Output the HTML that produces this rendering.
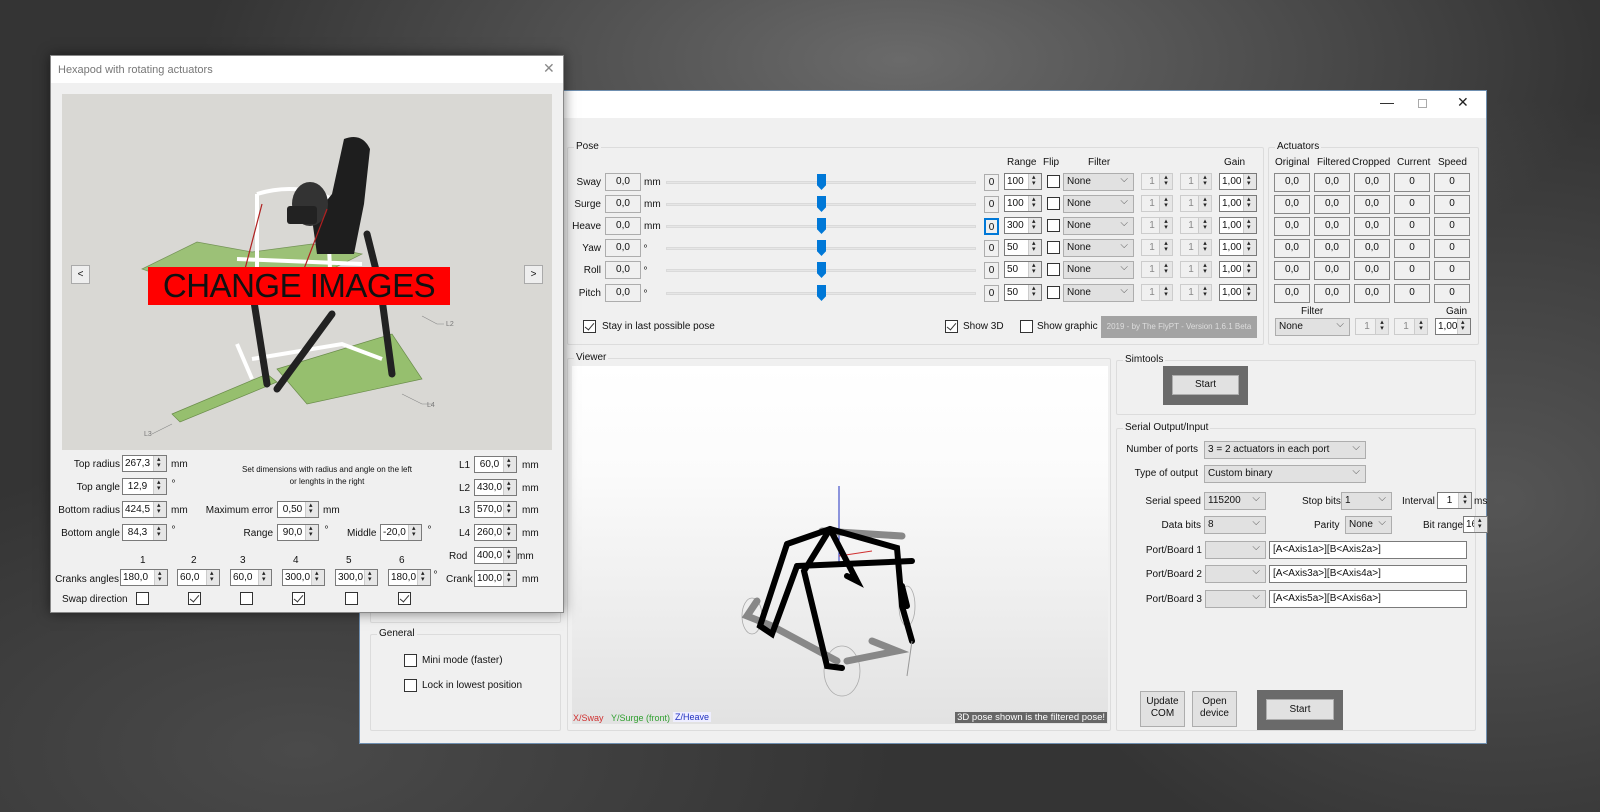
<!DOCTYPE html>
<html><head><meta charset="utf-8">
<style>
*{box-sizing:border-box;margin:0;padding:0;white-space:nowrap}
body{width:1600px;height:812px;overflow:hidden;position:relative;font-family:"Liberation Sans",sans-serif;font-size:10px;color:#111;
background:radial-gradient(ellipse 700px 300px at 900px 60px,#6a6a6a,transparent),radial-gradient(ellipse 500px 400px at 1500px 500px,#555,transparent),radial-gradient(ellipse 600px 300px at 300px 750px,#4a4a4a,transparent),#343434;}
.a{position:absolute}
.win{position:absolute;background:#f0f0f0;border:1px solid #6f8fb0}
.tb{position:absolute;left:0;right:0;top:0;height:27px;background:#fff}
.gb{position:absolute;border:1px solid #dcdcdc;border-radius:2px}
.gl{position:absolute;top:-7px;left:6px;background:#f0f0f0;padding:0 2px;font-size:10px}
.tx{position:absolute;height:18px;border:1px solid #adadad;background:#f0f0f0;text-align:center;line-height:16px;font-size:10px}
.sp{position:absolute;height:17px;border:1px solid #7a7a7a;background:#fff;line-height:15px;padding-left:2px;font-size:10px;overflow:hidden}
.sp:after{content:"";position:absolute;right:0;top:0;bottom:0;width:12px;background:#e6e6e6;border-left:1px solid #ccc}
.sp i{position:absolute;right:3px;top:1px;width:6px;font-style:normal;font-size:7px;line-height:6px;z-index:1;color:#222}
.spd{border-color:#ccc;color:#888;background:#f0f0f0;text-align:center;padding-right:12px}
.cb{position:absolute;width:13px;height:13px;border:1px solid #333;background:#fff}
.cb.k:after{content:"";position:absolute;left:3px;top:0px;width:4px;height:8px;border:solid #333;border-width:0 1px 1px 0;transform:rotate(40deg)}
.cmb{position:absolute;height:18px;border:1px solid #adadad;background:#e1e1e1;padding-left:3px;line-height:16px;font-size:10px}
.cmb:after{content:"⌵";position:absolute;right:5px;top:-2px;color:#555;font-size:10px}
.r{text-align:right}
.btn{position:absolute;background:#e1e1e1;border:1px solid #adadad;text-align:center;font-size:10px}
</style></head><body>

<div class="win" style="left:359px;top:90px;width:1128px;height:654px">
 <div class="tb" style="height:27px"></div>
 <div class="a" style="left:1020px;top:3px;font-size:14px;color:#222">—</div>
 <div class="a" style="left:1058px;top:8px;width:9px;height:9px;border:1px solid #aaa"></div>
 <div class="a" style="left:1097px;top:3px;font-size:14px;color:#222">✕</div>
</div>

<div class="gb" style="left:370px;top:560px;width:191px;height:63px"></div>
<div class="gb" style="left:370px;top:634px;width:191px;height:97px"><span class="gl">General</span></div>
<div class="cb" style="left:404px;top:654px"></div><div class="a" style="left:422px;top:655px">Mini mode (faster)</div>
<div class="cb" style="left:404px;top:679px"></div><div class="a" style="left:422px;top:680px">Lock in lowest position</div>

<div class="gb" style="left:567px;top:147px;width:697px;height:198px"><span class="gl">Pose</span></div>
<div class="a" style="left:1007px;top:157px">Range</div>
<div class="a" style="left:1043px;top:157px">Flip</div>
<div class="a" style="left:1088px;top:157px">Filter</div>
<div class="a" style="left:1224px;top:157px">Gain</div>

<div id="rows"></div>

<div class="cb k" style="left:583px;top:320px"></div><div class="a" style="left:602px;top:321px">Stay in last possible pose</div>
<div class="cb k" style="left:945px;top:320px"></div><div class="a" style="left:963px;top:321px">Show 3D</div>
<div class="cb" style="left:1020px;top:320px"></div><div class="a" style="left:1037px;top:321px">Show graphic</div>
<div class="a" style="left:1101px;top:316px;width:156px;height:22px;background:#a3a3a3;color:#ddd;font-size:8px;line-height:22px;text-align:center">2019 - by The FlyPT - Version 1.6.1 Beta</div>

<div class="gb" style="left:1268px;top:147px;width:211px;height:198px"><span class="gl">Actuators</span></div>
<div class="a" style="left:1275px;top:157px">Original</div>
<div class="a" style="left:1317px;top:157px">Filtered</div>
<div class="a" style="left:1352px;top:157px">Cropped</div>
<div class="a" style="left:1397px;top:157px">Current</div>
<div class="a" style="left:1438px;top:157px">Speed</div>
<div id="acts"></div>
<div class="a" style="left:1301px;top:306px">Filter</div>
<div class="a" style="left:1446px;top:306px">Gain</div>
<div class="cmb" style="left:1275px;top:318px;width:75px">None</div>
<div class="sp spd" style="left:1355px;top:318px;width:34px">1<i>▴<br>▾</i></div>
<div class="sp spd" style="left:1394px;top:318px;width:34px">1<i>▴<br>▾</i></div>
<div class="sp" style="left:1435px;top:318px;width:36px">1,00<i>▴<br>▾</i></div>

<div class="gb" style="left:567px;top:358px;width:544px;height:373px"><span class="gl">Viewer</span></div>
<div class="a" style="left:572px;top:366px;width:536px;height:358px;overflow:hidden;background:linear-gradient(#fff 0%,#fbfbfb 30%,#e2e2e2 100%)">
<svg width="536" height="358" style="position:absolute;left:0;top:0">
 <line x1="267" y1="120" x2="267" y2="200" stroke="#2030c0" stroke-width="1"/>
 <line x1="267" y1="190" x2="300" y2="185" stroke="#d03030" stroke-width="1"/>
 <g fill="none" stroke="#aaa" stroke-width="0.8">
  <ellipse cx="180" cy="250" rx="10" ry="18"/><ellipse cx="270" cy="305" rx="18" ry="25"/><ellipse cx="335" cy="240" rx="8" ry="20"/>
 </g>
 <g stroke="#888" stroke-width="7" stroke-linecap="round" fill="none">
  <path d="M185 235 L175 250 L200 260"/><path d="M200 260 L265 295"/><path d="M275 295 L325 285 L300 275"/><path d="M250 165 L330 170"/>
 </g>
 <g stroke="#000" stroke-width="6" stroke-linecap="round" fill="none">
  <path d="M215 178 L258 163 L325 182 L330 240 L340 275"/>
  <path d="M258 163 L232 205 L255 300 L270 302"/>
  <path d="M215 178 L188 260 L200 268 L225 200"/>
  <path d="M225 200 L340 195"/>
  <path d="M258 163 L285 215 L275 210"/>
  <path d="M330 220 L335 240"/>
 </g>
 <line x1="340" y1="275" x2="335" y2="310" stroke="#999" stroke-width="1"/>
</svg>
<div class="a" style="left:1px;top:347px;font-size:9px;color:#d03030">X/Sway</div>
<div class="a" style="left:39px;top:347px;font-size:9px;color:#30a030">Y/Surge (front)</div>
<div class="a" style="left:101px;top:346px;font-size:9px;color:#2030c0;background:#eef;padding:0 2px">Z/Heave</div>
<div class="a" style="right:1px;top:346px;font-size:9.5px;color:#fff;background:#666;padding:0 2px">3D pose shown is the filtered pose!</div>
</div>

<div class="gb" style="left:1116px;top:360px;width:360px;height:55px"><span class="gl">Simtools</span></div>
<div class="a" style="left:1163px;top:366px;width:85px;height:39px;background:#6a6a6a"></div>
<div class="btn" style="left:1172px;top:375px;width:67px;height:20px;line-height:18px">Start</div>

<div class="gb" style="left:1116px;top:428px;width:360px;height:303px"><span class="gl">Serial Output/Input</span></div>
<div class="a r" style="left:1120px;top:444px;width:78px">Number of ports</div>
<div class="cmb" style="left:1204px;top:441px;width:162px">3 = 2 actuators in each port</div>
<div class="a r" style="left:1120px;top:468px;width:78px">Type of output</div>
<div class="cmb" style="left:1204px;top:465px;width:162px">Custom binary</div>
<div class="a r" style="left:1120px;top:496px;width:81px">Serial speed</div>
<div class="cmb" style="left:1204px;top:492px;width:62px">115200</div>
<div class="a" style="left:1302px;top:496px">Stop bits</div>
<div class="cmb" style="left:1341px;top:492px;width:51px">1</div>
<div class="a" style="left:1402px;top:496px">Interval</div>
<div class="sp" style="left:1437px;top:492px;width:35px;text-align:center;padding-right:12px">1<i>▴<br>▾</i></div>
<div class="a" style="left:1474px;top:496px">ms</div>
<div class="a r" style="left:1120px;top:520px;width:81px">Data bits</div>
<div class="cmb" style="left:1204px;top:516px;width:62px">8</div>
<div class="a" style="left:1314px;top:520px">Parity</div>
<div class="cmb" style="left:1345px;top:516px;width:47px">None</div>
<div class="a" style="left:1423px;top:520px">Bit range</div>
<div class="sp" style="left:1463px;top:516px;width:25px">16<i>▴<br>▾</i></div>
<div class="a r" style="left:1120px;top:545px;width:82px">Port/Board 1</div>
<div class="cmb" style="left:1205px;top:541px;width:61px"></div>
<div class="a" style="left:1269px;top:541px;width:198px;height:18px;border:1px solid #7a7a7a;background:#fff;padding-left:3px;line-height:16px">[A&lt;Axis1a&gt;][B&lt;Axis2a&gt;]</div>
<div class="a r" style="left:1120px;top:569px;width:82px">Port/Board 2</div>
<div class="cmb" style="left:1205px;top:565px;width:61px"></div>
<div class="a" style="left:1269px;top:565px;width:198px;height:18px;border:1px solid #7a7a7a;background:#fff;padding-left:3px;line-height:16px">[A&lt;Axis3a&gt;][B&lt;Axis4a&gt;]</div>
<div class="a r" style="left:1120px;top:594px;width:82px">Port/Board 3</div>
<div class="cmb" style="left:1205px;top:590px;width:61px"></div>
<div class="a" style="left:1269px;top:590px;width:198px;height:18px;border:1px solid #7a7a7a;background:#fff;padding-left:3px;line-height:16px">[A&lt;Axis5a&gt;][B&lt;Axis6a&gt;]</div>
<div class="btn" style="left:1140px;top:691px;width:45px;height:36px;padding-top:4px;line-height:12px">Update<br>COM</div>
<div class="btn" style="left:1192px;top:691px;width:45px;height:36px;padding-top:4px;line-height:12px">Open<br>device</div>
<div class="a" style="left:1257px;top:690px;width:86px;height:40px;background:#6a6a6a"></div>
<div class="btn" style="left:1266px;top:699px;width:68px;height:21px;line-height:19px">Start</div>

<div class="win" style="left:50px;top:55px;width:514px;height:558px;border-color:#888;box-shadow:0 0 12px rgba(0,0,0,.5)">
 <div class="tb" style="height:27px"></div>
 <div class="a" style="left:7px;top:8px;font-size:11px;color:#777">Hexapod with rotating actuators</div>
 <div class="a" style="left:492px;top:4px;font-size:14px;color:#888">✕</div>
 <div class="a" style="left:11px;top:38px;width:490px;height:356px;background:#d9d8d4">
  <svg width="490" height="356" style="position:absolute;left:0;top:0">
   <polygon points="80,175 135,148 190,158 250,150 300,160 250,185 100,182" fill="#96bf6e" stroke="#6a8c4a" stroke-width="0.7" opacity="0.9"/>
   <polygon points="215,275 330,240 360,285 245,310" fill="#96bf6e" stroke="#6a8c4a" stroke-width="0.7"/>
   <polygon points="110,320 205,280 215,288 118,328" fill="#96bf6e" stroke="#6a8c4a" stroke-width="0.7"/>
   <g stroke="#fff" stroke-width="4" fill="none"><path d="M195 100 L195 175 M265 110 L268 175 M195 100 Q235 88 270 105 M175 165 L300 170 M190 265 L280 250 L320 265 M175 250 L190 285"/></g>
   <g stroke="#222" stroke-width="7" stroke-linecap="round"><line x1="190" y1="195" x2="205" y2="290"/><line x1="320" y1="205" x2="330" y2="280"/><line x1="270" y1="220" x2="215" y2="295"/><line x1="305" y1="140" x2="320" y2="200"/></g>
   <path d="M282 45 Q300 38 308 55 L302 110 L292 160 L255 160 L250 125 L270 100 Z" fill="#1e1e1e"/>
   <ellipse cx="248" cy="110" rx="18" ry="22" fill="#333"/>
   <rect x="225" y="112" width="30" height="18" fill="#222" rx="3"/>
   <g stroke="#b02020" stroke-width="1.2"><line x1="200" y1="110" x2="183" y2="175"/><line x1="265" y1="115" x2="240" y2="180"/></g>
   <g stroke="#888" stroke-width="0.6" fill="none"><path d="M340 300 L360 310 L370 310 M90 340 L110 330 M360 222 L375 230 L382 230"/></g>
   <text x="365" y="313" font-size="7" fill="#777">L4</text><text x="82" y="342" font-size="7" fill="#777">L3</text><text x="384" y="232" font-size="7" fill="#777">L2</text>
  </svg>
  <div class="a" style="left:86px;top:173px;width:302px;height:38px;background:#f00;color:#111;font-size:33px;line-height:38px;text-align:center;letter-spacing:-0.5px">CHANGE IMAGES</div>
  <div class="a" style="left:9px;top:171px;width:19px;height:19px;border:1px solid #aaa;background:#eee;text-align:center;line-height:17px;font-size:10px">&lt;</div>
  <div class="a" style="left:462px;top:171px;width:19px;height:19px;border:1px solid #aaa;background:#eee;text-align:center;line-height:17px;font-size:10px">&gt;</div>
 </div>
</div>

<div class="a r" style="left:50px;top:459px;width:70px">Top radius</div><div class="sp" style="left:122px;top:455px;width:45px">267,3<i>▴<br>▾</i></div><div class="a" style="left:171px;top:459px">mm</div>
<div class="a r" style="left:50px;top:482px;width:70px">Top angle</div><div class="sp" style="left:122px;top:478px;width:45px">&nbsp;12,9<i>▴<br>▾</i></div><div class="a" style="left:172px;top:478px;font-size:8px">º</div>
<div class="a r" style="left:40px;top:505px;width:80px">Bottom radius</div><div class="sp" style="left:122px;top:501px;width:45px">424,5<i>▴<br>▾</i></div><div class="a" style="left:171px;top:505px">mm</div>
<div class="a r" style="left:40px;top:528px;width:80px">Bottom angle</div><div class="sp" style="left:122px;top:524px;width:45px">&nbsp;84,3<i>▴<br>▾</i></div><div class="a" style="left:172px;top:524px;font-size:8px">º</div>
<div class="a" style="left:212px;top:464px;width:230px;text-align:center;font-size:8px;line-height:12px">Set dimensions with radius and angle on the left<br>or lenghts in the right</div>
<div class="a r" style="left:190px;top:505px;width:83px">Maximum error</div><div class="sp" style="left:277px;top:501px;width:42px">&nbsp;0,50<i>▴<br>▾</i></div><div class="a" style="left:323px;top:505px">mm</div>
<div class="a r" style="left:200px;top:528px;width:73px">Range</div><div class="sp" style="left:277px;top:524px;width:42px">&nbsp;90,0<i>▴<br>▾</i></div><div class="a" style="left:325px;top:524px;font-size:8px">º</div>
<div class="a" style="left:347px;top:528px">Middle</div><div class="sp" style="left:380px;top:524px;width:42px">-20,0<i>▴<br>▾</i></div><div class="a" style="left:428px;top:524px;font-size:8px">º</div>
<div class="a" style="left:459px;top:460px">L1</div><div class="sp" style="left:474px;top:456px;width:43px">&nbsp;60,0<i>▴<br>▾</i></div><div class="a" style="left:522px;top:460px">mm</div>
<div class="a" style="left:459px;top:483px">L2</div><div class="sp" style="left:474px;top:479px;width:43px">430,0<i>▴<br>▾</i></div><div class="a" style="left:522px;top:483px">mm</div>
<div class="a" style="left:459px;top:505px">L3</div><div class="sp" style="left:474px;top:501px;width:43px">570,0<i>▴<br>▾</i></div><div class="a" style="left:522px;top:505px">mm</div>
<div class="a" style="left:459px;top:528px">L4</div><div class="sp" style="left:474px;top:524px;width:43px">260,0<i>▴<br>▾</i></div><div class="a" style="left:522px;top:528px">mm</div>
<div class="a" style="left:449px;top:551px">Rod</div><div class="sp" style="left:474px;top:547px;width:43px">400,0<i>▴<br>▾</i></div><div class="a" style="left:517px;top:551px">mm</div>
<div class="a" style="left:446px;top:574px">Crank</div><div class="sp" style="left:474px;top:570px;width:43px">100,0<i>▴<br>▾</i></div><div class="a" style="left:522px;top:574px">mm</div>
<div class="a" style="left:140px;top:555px">1</div><div class="a" style="left:191px;top:555px">2</div><div class="a" style="left:240px;top:555px">3</div><div class="a" style="left:293px;top:555px">4</div><div class="a" style="left:346px;top:555px">5</div><div class="a" style="left:399px;top:555px">6</div>
<div class="a r" style="left:40px;top:574px;width:79px">Cranks angles</div>
<div class="sp" style="left:120px;top:569px;width:48px">180,0<i>▴<br>▾</i></div>
<div class="sp" style="left:177px;top:569px;width:43px">60,0<i>▴<br>▾</i></div>
<div class="sp" style="left:230px;top:569px;width:42px">60,0<i>▴<br>▾</i></div>
<div class="sp" style="left:282px;top:569px;width:43px">300,0<i>▴<br>▾</i></div>
<div class="sp" style="left:335px;top:569px;width:43px">300,0<i>▴<br>▾</i></div>
<div class="sp" style="left:388px;top:569px;width:43px">180,0<i>▴<br>▾</i></div>
<div class="a" style="left:434px;top:569px;font-size:8px">º</div>
<div class="a" style="left:62px;top:594px">Swap direction</div>
<div class="cb" style="left:136px;top:592px"></div><div class="cb k" style="left:188px;top:592px"></div><div class="cb" style="left:240px;top:592px"></div><div class="cb k" style="left:292px;top:592px"></div><div class="cb" style="left:345px;top:592px"></div><div class="cb k" style="left:398px;top:592px"></div>

<script>
var names=["Sway","Surge","Heave","Yaw","Roll","Pitch"],ranges=[100,100,300,50,50,50],ys=[173,195,217,239,261,284],h="",a="";
for(var i=0;i<6;i++){var y=ys[i];
h+='<div class="a r" style="left:555px;top:'+(y+4)+'px;width:46px">'+names[i]+'</div>';
h+='<div class="tx" style="left:605px;top:'+y+'px;width:36px">0,0</div>';
h+='<div class="a" style="left:644px;top:'+(y+4)+'px;'+(i>2?'font-size:8px':'')+'">'+(i<3?'mm':'º')+'</div>';
h+='<div class="a" style="left:666px;top:'+(y+8)+'px;width:310px;height:3px;background:#e6e6e6;border:1px solid #dadada"></div>';
h+='<div class="a" style="left:817px;top:'+(y+1)+'px;width:9px;height:16px;background:#0078d7;clip-path:polygon(0 0,100% 0,100% 70%,50% 100%,0 70%)"></div>';
h+='<div class="tx" style="left:984px;top:'+(y+1)+'px;width:15px;height:17px;'+(i==2?'border:2px solid #0078d7;':'')+'">0</div>';
h+='<div class="sp" style="left:1004px;top:'+y+'px;width:38px">'+ranges[i]+'<i>▴<br>▾</i></div>';
h+='<div class="cb" style="left:1047px;top:'+(y+2)+'px"></div>';
h+='<div class="cmb" style="left:1063px;top:'+y+'px;width:71px">None</div>';
h+='<div class="sp spd" style="left:1141px;top:'+y+'px;width:32px">1<i>▴<br>▾</i></div>';
h+='<div class="sp spd" style="left:1180px;top:'+y+'px;width:32px">1<i>▴<br>▾</i></div>';
h+='<div class="sp" style="left:1219px;top:'+y+'px;width:38px">1,00<i>▴<br>▾</i></div>';
var xs=[1274,1314,1354,1394,1434],v=["0,0","0,0","0,0","0","0"];
for(var j=0;j<5;j++)a+='<div class="tx" style="left:'+xs[j]+'px;top:'+y+'px;width:36px;height:19px;border-color:#888">'+v[j]+'</div>';
}
document.getElementById("rows").outerHTML=h;document.getElementById("acts").outerHTML=a;
</script>
</body></html>
